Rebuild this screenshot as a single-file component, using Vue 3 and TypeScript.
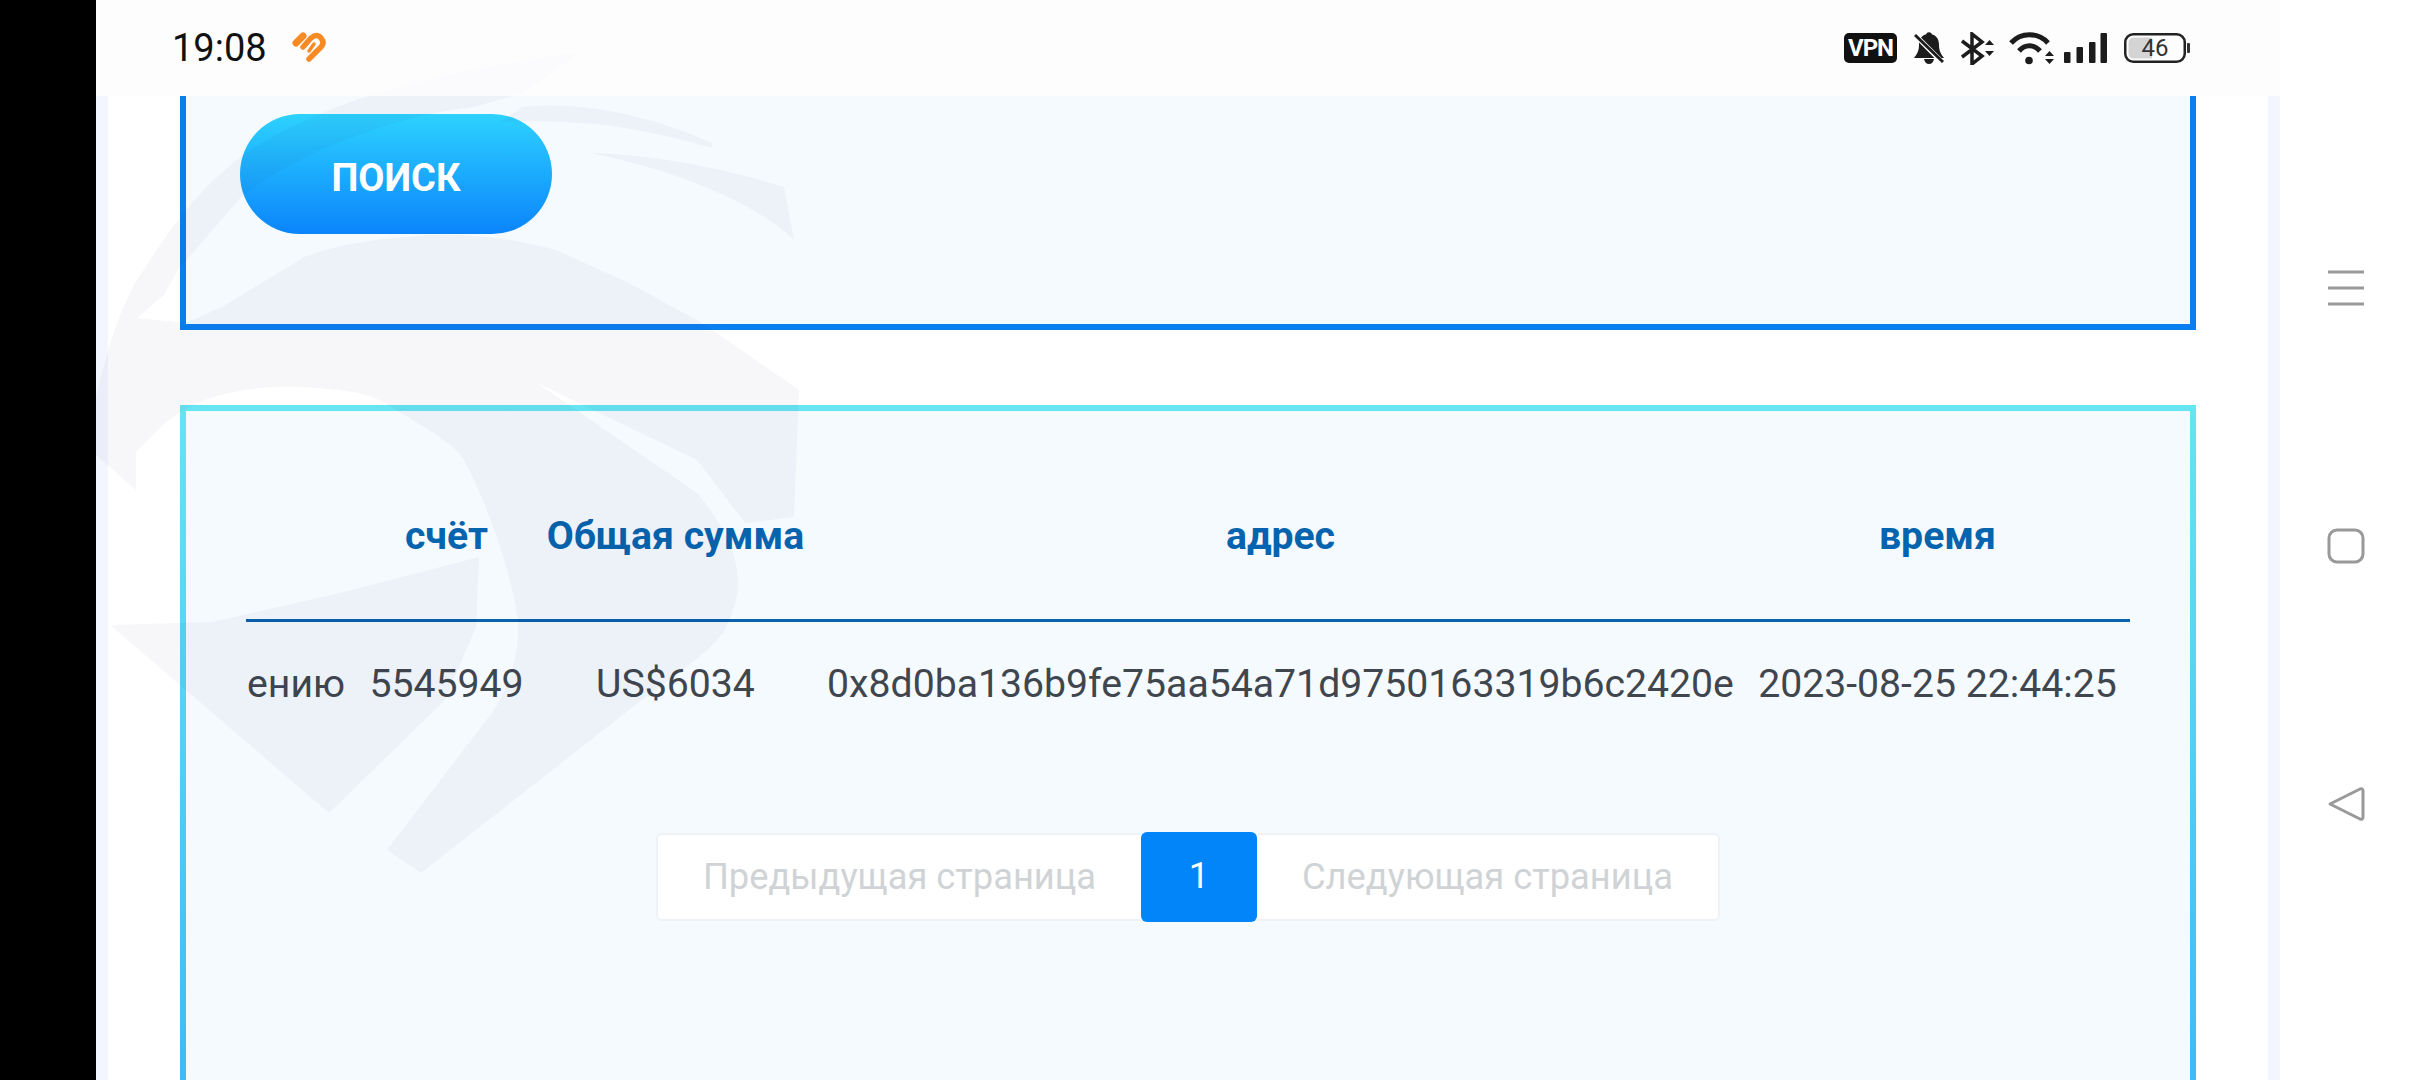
<script setup lang="ts">
interface Row {
  note: string
  account: string
  total: string
  address: string
  time: string
}

const headers: string[] = ['', 'счёт', 'Общая сумма', 'адрес', 'время']
const rows: Row[] = [
  {
    note: 'ению',
    account: '5545949',
    total: 'US$6034',
    address: '0x8d0ba136b9fe75aa54a71d9750163319b6c2420e',
    time: '2023-08-25 22:44:25',
  },
]
</script>

<template>
  <div class="device">
    <div class="edge"></div>
    <div class="frame">
      <header class="status">
        <div class="status-left">
          <span class="clock">19:08</span>
          <svg class="heart" width="38" height="34" viewBox="0 0 38 34" fill="none" stroke="#f68b26" stroke-linecap="round">
            <path d="M6 12 L13 5" stroke-width="7" />
            <path d="M13 16 L21 7 Q27 2 31 7 Q35 12 31 16 L19 28" stroke-width="5.500" />
            <path d="M19 20 L24 13" stroke-width="3.500" />
          </svg>
        </div>
        <div class="status-right">
          <span class="vpn">VPN</span>
          <svg class="i-bell" width="30" height="32" viewBox="0 0 30 32">
            <circle cx="15" cy="3" r="2.800" fill="#1c1c1c" />
            <path d="M15 2 C7 2 5 8 5 13 C5 19 3 22 0 26 L30 26 C27 22 25 19 25 13 C25 8 23 2 15 2 Z" fill="#1c1c1c" />
            <path d="M10 27 H20 Q19 32 15 32 Q11 32 10 27 Z" fill="#1c1c1c" />
            <path d="M3 5 L29 31" stroke="#fcfcfd" stroke-width="5" />
            <path d="M1 3 L29 30" stroke="#1c1c1c" stroke-width="3" />
          </svg>
          <svg class="i-bt" width="33" height="33" viewBox="0 0 33 33" fill="none">
            <path d="M1 9 L21 24 L11 32 V2 L21 10 L1 25" stroke="#1c1c1c" stroke-width="3.500" />
            <path d="M24 13 L28.500 8 L33 13 Z M24 19 L28.500 24 L33 19 Z" fill="#1c1c1c" />
          </svg>
          <svg class="i-wifi" width="45" height="34" viewBox="0 0 45 34" fill="none">
            <path d="M2 12 C12 1 29 1 39 12" stroke="#1c1c1c" stroke-width="5" />
            <path d="M10 20 C16 13 25 13 31 20" stroke="#1c1c1c" stroke-width="5" />
            <circle cx="20" cy="29.500" r="3.800" fill="#1c1c1c" />
            <path d="M36 25 L40.500 20 L45 25 Z M36 28 L40.500 33 L45 28 Z" fill="#1c1c1c" />
          </svg>
          <svg class="i-signal" width="43" height="30" viewBox="0 0 43 30" fill="#1c1c1c">
            <rect x="0" y="19" width="6.500" height="11" rx="1" />
            <rect x="12.500" y="14" width="6.500" height="16" rx="1" />
            <rect x="25" y="9" width="6.500" height="21" rx="1" />
            <rect x="36.500" y="0" width="6.500" height="30" rx="1" />
          </svg>
          <svg class="i-battery" width="66" height="30" viewBox="0 0 66 30">
            <rect x="1.250" y="1.250" width="59.500" height="27.500" rx="8" fill="none" stroke="#222" stroke-width="2.500" />
            <path d="M10 4.500 H28 V25.500 H10 Q4.500 25.500 4.500 20 V10 Q4.500 4.500 10 4.500 Z" fill="#d4d4d4" />
            <rect x="63" y="10" width="3" height="10" rx="1" fill="#333" />
            <text x="31" y="23" text-anchor="middle" class="batt-text">46</text>
          </svg>
        </div>
      </header>

      <main class="page">
        <section class="panel panel-search">
          <button class="search-btn" type="button">поиск</button>
        </section>

        <section class="panel panel-results">
          <table class="records">
            <colgroup>
              <col class="c-note" />
              <col class="c-account" />
              <col class="c-total" />
              <col class="c-address" />
              <col class="c-time" />
            </colgroup>
            <thead>
              <tr>
                <th v-for="(h, i) in headers" :key="i">{{ h }}</th>
              </tr>
            </thead>
            <tbody>
              <tr v-for="row in rows" :key="row.account">
                <td class="note">{{ row.note }}</td>
                <td>{{ row.account }}</td>
                <td>{{ row.total }}</td>
                <td>{{ row.address }}</td>
                <td>{{ row.time }}</td>
              </tr>
            </tbody>
          </table>

          <nav class="pager">
            <span class="pg prev">Предыдущая страница</span>
            <span class="pg current">1</span>
            <span class="pg next">Следующая страница</span>
          </nav>
        </section>
      </main>

      <svg class="watermark" viewBox="0 0 2184 1080" width="2184" height="1080" aria-hidden="true">
        <g transform="translate(-96 0)" fill="rgba(30,30,80,.036)">
          <path d="M581,52 C450,70 330,95 241,157 C190,195 160,245 135,283 C115,320 105,360 96,397 L96,455 L136,490 L136,453 C165,420 190,395 261,388 C290,385 320,388 338,390 C370,393 385,402 396,410 C430,430 455,445 464,460 C490,510 510,570 518,620 C520,650 510,685 494,710 L387,850 L421,873 L629,710 C680,670 715,650 726,627 C745,590 745,550 697,493 L649,460 L537,383 L697,460 L745,523 L794,517 L799,390 L702,323 L629,283 L556,250 C500,235 450,232 406,237 C370,240 335,245 304,257 L222,307 L186,323 L137,318 L164,295 L178,270 L241,197 C300,150 400,115 474,107 L523,93 Z" />
          <path d="M110,625 L212,622 L340,593 L479,557 L476,627 L445,700 L329,813 Z" />
          <path d="M522,107 C590,100 660,120 712,143 L712,148 C650,130 590,118 500,122 Z" />
          <path d="M590,153 C660,155 730,170 784,187 L794,240 C770,215 700,175 590,153 Z" />
        </g>
      </svg>
    </div>

    <aside class="navbar">
      <svg width="38" height="36" viewBox="0 0 38 36" stroke="#999" stroke-width="3" fill="none">
        <path d="M1 2 H37 M1 18 H37 M1 34 H37" />
      </svg>
      <svg width="38" height="36" viewBox="0 0 38 36" stroke="#999" stroke-width="3" fill="none">
        <rect x="2" y="2" width="34" height="32" rx="8" />
      </svg>
      <svg width="38" height="36" viewBox="0 0 38 36" stroke="#999" stroke-width="3" fill="none" stroke-linejoin="round">
        <path d="M3 18 L33 3 Q36 2 36 5 V31 Q36 34 33 33 Z" />
      </svg>
    </aside>
  </div>
</template>

<style>
html,
body {
  margin: 0;
  background: #000;
  overflow: hidden;
}
</style>

<style scoped>
.device {
  width: 2412px;
  height: 1080px;
  display: flex;
  overflow: hidden;
  font-family: Roboto, "Noto Sans", sans-serif;
  background: #000;
}
.edge {
  width: 96px;
  flex: none;
  background: #000;
}
.frame {
  width: 2184px;
  flex: none;
  position: relative;
  display: flex;
  flex-direction: column;
  background: #fff;
  overflow: hidden;
}
.status {
  height: 96px;
  flex: none;
  position: relative;
  z-index: 2;
  display: flex;
  align-items: center;
  justify-content: space-between;
  padding: 0 90px 0 76px;
  background: rgba(252, 252, 253, 0.72);
}
.status-left {
  display: flex;
  align-items: center;
  gap: 23px;
}
.clock {
  font-size: 38px;
  line-height: 48px;
  color: #111;
}
.status-right {
  display: flex;
  align-items: center;
}
.vpn {
  width: 53px;
  height: 30px;
  border-radius: 5px;
  background: #111;
  color: #fff;
  font-weight: 700;
  font-size: 24px;
  line-height: 30px;
  text-align: center;
  letter-spacing: -1px;
}
.i-bell {
  margin-left: 17px;
}
.i-bt {
  margin-left: 17px;
}
.i-wifi {
  margin-left: 15px;
}
.i-signal {
  margin-left: 10px;
}
.i-battery {
  margin-left: 17px;
}
.batt-text {
  font-family: Roboto, sans-serif;
  font-size: 24px;
  fill: #333;
}
.page {
  flex: 1;
  min-height: 0;
  background: #fff;
  border-left: 12px solid #f3f6fe;
  border-right: 12px solid #f3f6fe;
  overflow: hidden;
  display: flex;
  flex-direction: column;
  padding: 0 72px;
}
.panel {
  flex: none;
  background: #f5faff;
  border-style: solid;
  border-width: 6px;
}
.panel-search {
  height: 234px;
  box-sizing: border-box;
  border-top: 0;
  border-color: #0a7ff0;
  padding: 18px 0 0 54px;
}
.search-btn {
  display: block;
  width: 312px;
  height: 120px;
  border: 0;
  border-radius: 60px;
  background: linear-gradient(180deg, #2dd2ff 0%, #0a84fb 100%);
  color: #fff;
  font-family: Roboto, sans-serif;
  font-weight: 700;
  font-size: 38px;
  text-transform: uppercase;
  padding: 8px 0 0;
}
.panel-results {
  margin-top: 75px;
  height: 760px;
  box-sizing: border-box;
  border-image: linear-gradient(180deg, #66e4f1 0%, #3ab6f6 100%) 1;
  padding: 0 60px;
}
.records {
  width: 1884px;
  table-layout: fixed;
  border-collapse: collapse;
  font-size: 39.2px;
}
.c-note {
  width: 112px;
}
.c-account {
  width: 177px;
}
.c-total {
  width: 281px;
}
.c-address {
  width: 929px;
}
.c-time {
  width: 385px;
}
th {
  padding: 101px 0 59px;
  line-height: 48px;
  font-weight: 700;
  color: #0664ae;
  text-align: center;
  border-bottom: 3px solid #0b62ae;
}
td {
  padding: 38px 0;
  line-height: 48px;
  color: #40464e;
  text-align: center;
  white-space: nowrap;
}
td.note {
  text-align: right;
  padding-right: 13px;
  box-sizing: border-box;
  overflow: hidden;
}
.pager {
  display: flex;
  justify-content: center;
  align-items: center;
  margin-top: 86px;
}
.pg {
  box-sizing: border-box;
  height: 88px;
  line-height: 84px;
  font-size: 36.300px;
  color: #d0d3d6;
  background: #fff;
  border: 2px solid #eef2f6;
  text-align: center;
}
.prev {
  width: 485px;
  border-right: 0;
  border-radius: 6px 0 0 6px;
}
.next {
  width: 463px;
  border-left: 0;
  border-radius: 0 6px 6px 0;
}
.current {
  width: 116px;
  height: 90px;
  line-height: 88px;
  border: 0;
  background: #0385fa;
  color: #fff;
  border-radius: 6px;
}
.watermark {
  position: absolute;
  left: 0;
  top: 0;
  z-index: 1;
  pointer-events: none;
}
.navbar {
  width: 132px;
  flex: none;
  box-sizing: border-box;
  background: #fff;
  display: flex;
  flex-direction: column;
  align-items: center;
  gap: 222px;
  padding-top: 270px;
}
</style>
